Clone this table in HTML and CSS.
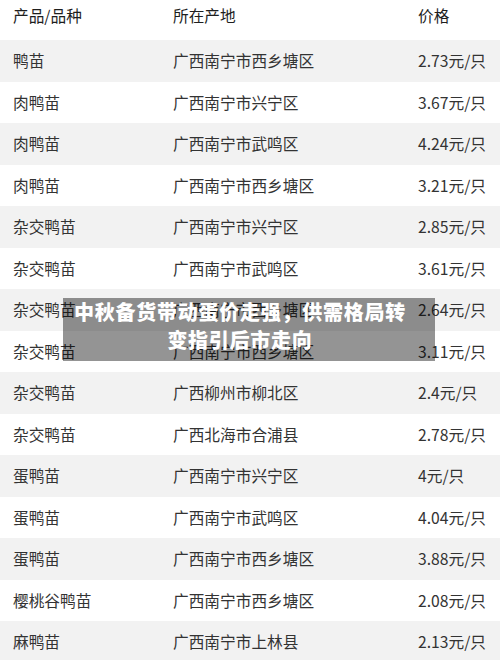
FILE: index.html
```html
<!DOCTYPE html>
<html lang="zh">
<head>
<meta charset="utf-8">
<link rel="stylesheet" href="styles.css">
</head>
<body>
<div class="page">
  <div class="table">
    <div class="row head"><div>产品/品种</div><div>所在产地</div><div>价格</div></div>
    <div class="row odd"><div>鸭苗</div><div>广西南宁市西乡塘区</div><div>2.73元/只</div></div>
    <div class="row"><div>肉鸭苗</div><div>广西南宁市兴宁区</div><div>3.67元/只</div></div>
    <div class="row odd"><div>肉鸭苗</div><div>广西南宁市武鸣区</div><div>4.24元/只</div></div>
    <div class="row"><div>肉鸭苗</div><div>广西南宁市西乡塘区</div><div>3.21元/只</div></div>
    <div class="row odd"><div>杂交鸭苗</div><div>广西南宁市兴宁区</div><div>2.85元/只</div></div>
    <div class="row"><div>杂交鸭苗</div><div>广西南宁市武鸣区</div><div>3.61元/只</div></div>
    <div class="row odd"><div>杂交鸭苗</div><div>广西南宁市西乡塘区</div><div>2.64元/只</div></div>
    <div class="row"><div>杂交鸭苗</div><div>广西南宁市西乡塘区</div><div>3.11元/只</div></div>
    <div class="row odd"><div>杂交鸭苗</div><div>广西柳州市柳北区</div><div>2.4元/只</div></div>
    <div class="row"><div>杂交鸭苗</div><div>广西北海市合浦县</div><div>2.78元/只</div></div>
    <div class="row odd"><div>蛋鸭苗</div><div>广西南宁市兴宁区</div><div>4元/只</div></div>
    <div class="row"><div>蛋鸭苗</div><div>广西南宁市武鸣区</div><div>4.04元/只</div></div>
    <div class="row odd"><div>蛋鸭苗</div><div>广西南宁市西乡塘区</div><div>3.88元/只</div></div>
    <div class="row"><div>樱桃谷鸭苗</div><div>广西南宁市西乡塘区</div><div>2.08元/只</div></div>
    <div class="row odd"><div>麻鸭苗</div><div>广西南宁市上林县</div><div>2.13元/只</div></div>
  </div>
  <div class="caption">中秋备货带动蛋价走强，供需格局转变指引后市走向</div>
</div>
</body>
</html>
```
FILE: styles.css
```css
html, body {
  margin: 0;
  padding: 0;
  background: #ffffff;
}
.page {
  position: relative;
  width: 500px;
  height: 660px;
  overflow: hidden;
  font-family: "Noto Sans CJK SC", "Noto Sans", sans-serif;
}
.table {
  display: flex;
  flex-direction: column;
}
.row {
  display: grid;
  grid-template-columns: 160px 245px 1fr;
  padding-left: 13px;
  height: 41.5px;
  align-items: center;
  font-size: 15.7px;
  color: #333333;
}
.row.odd {
  background: #f2f2f2;
}
.row.head {
  height: 40px;
  align-items: start;
  padding-top: 3px;
  box-sizing: border-box;
  color: #1e1e1e;
  line-height: 26px;
}
.caption {
  position: absolute;
  left: 63px;
  top: 298px;
  width: 372px;
  height: 63px;
  box-sizing: border-box;
  padding: 0 28px 0 10px;
  background: rgba(0, 0, 0, 0.42);
  color: #ffffff;
  font-size: 20px;
  font-weight: 900;
  letter-spacing: 0.75px;
  line-height: 28px;
  text-align: center;
}
```
